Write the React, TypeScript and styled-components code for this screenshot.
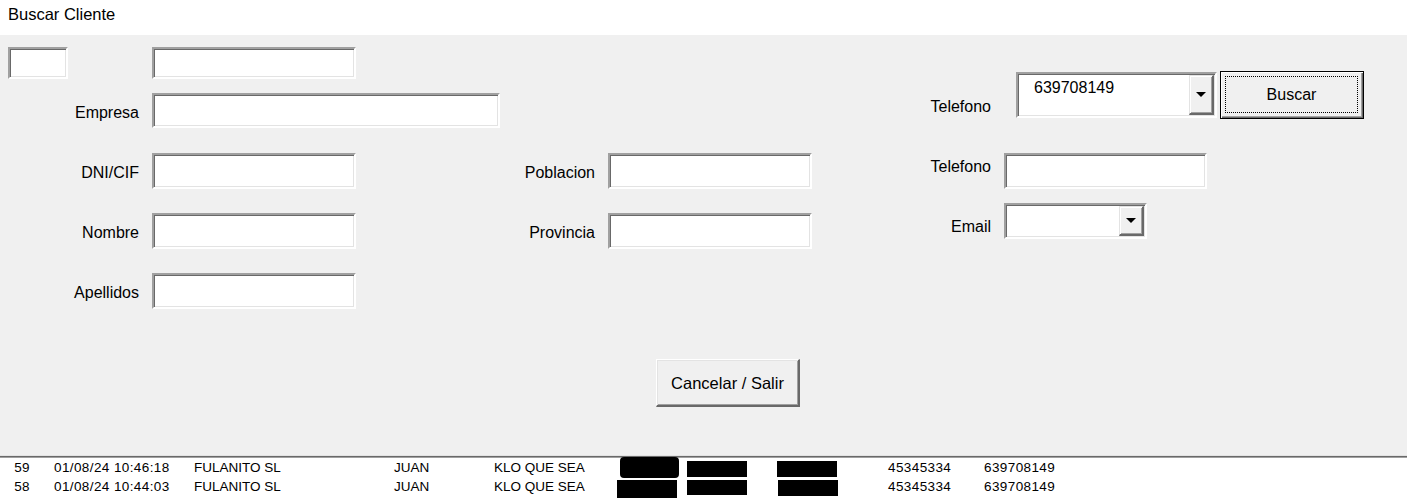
import React from "react";
import styled, { createGlobalStyle } from "styled-components";

const Global = createGlobalStyle`
  html, body { margin: 0; padding: 0; background: #fff; }
  body { font-family: "Liberation Sans", Arial, sans-serif; color: #000; }
  * { box-sizing: border-box; }
`;

const Window = styled.div`
  width: 1418px;
  height: 502px;
  overflow: hidden;
  background: #fff;
`;

const TitleBar = styled.div`
  height: 35px;
  padding: 5px 0 0 8px;
  font-size: 16.5px;
  line-height: 18px;
`;

const Panel = styled.div`
  width: 1407px;
  height: 421px;
  background: #f0f0f0;
  border-bottom: 1px solid #e3e3e3;
  display: flex;
  flex-direction: column;
`;

const Separator = styled.div`
  width: 1407px;
  height: 2px;
  border-top: 1px solid #696969;
  border-bottom: 1px solid #a0a0a0;
`;

const Columns = styled.div`
  display: flex;
  align-items: flex-start;
`;

const Column = styled.div<{ $w: number; $pt: number }>`
  width: ${(p) => p.$w}px;
  padding-top: ${(p) => p.$pt}px;
  display: flex;
  flex-direction: column;
`;

const TopRow = styled.div`
  display: flex;
  padding-left: 8px;
  gap: 84px;
`;

const FieldRow = styled.div<{ $mt?: number; $gap: number }>`
  display: flex;
  align-items: flex-start;
  margin-top: ${(p) => p.$mt ?? 0}px;
  gap: ${(p) => p.$gap}px;
`;

const Label = styled.div<{ $w: number; $pt: number }>`
  width: ${(p) => p.$w}px;
  padding-top: ${(p) => p.$pt}px;
  text-align: right;
  font-size: 16px;
  line-height: 18px;
  white-space: nowrap;
`;

const TextBox = styled.div<{ $w: number; $h: number; $mt?: number; $ml?: number }>`
  width: ${(p) => p.$w}px;
  height: ${(p) => p.$h}px;
  margin-top: ${(p) => p.$mt ?? 0}px;
  margin-left: ${(p) => p.$ml ?? 0}px;
  background: #fff;
  border-style: solid;
  border-width: 2px;
  border-color: #a0a0a0 #fff #fff #a0a0a0;
  box-shadow: inset 1px 1px 0 #696969, inset -1px -1px 0 #e3e3e3;
`;

const Combo = styled(TextBox)`
  display: flex;
  padding: 1px;
`;

const ComboText = styled.div`
  flex: 1;
  padding: 4px 0 0 15px;
  font-size: 16px;
  line-height: 18px;
`;

const DropButton = styled.div`
  width: 25px;
  height: 100%;
  background: #f0f0f0;
  border-style: solid;
  border-width: 1px 2px 2px 1px;
  border-color: #e3e3e3 #696969 #696969 #e3e3e3;
  box-shadow: inset 1px 1px 0 #fff, inset -1px -1px 0 #a0a0a0;
  display: flex;
  align-items: center;
  justify-content: center;
`;

const Arrow = () => (
  <svg width="10" height="5" viewBox="0 0 10 5">
    <polygon points="0,0 10,0 5,5" fill="#000" />
  </svg>
);

const DefaultButton = styled.div`
  width: 144px;
  height: 48px;
  margin-left: 3px;
  background: #f0f0f0;
  border: 1px solid #000;
  box-shadow: inset 1px 1px 0 #fff, inset -1px -1px 0 #696969, inset -2px -2px 0 #a0a0a0;
  padding: 4px 5px 5px 4px;
  display: flex;
`;

const FocusRect = styled.div`
  flex: 1;
  border: 1px dotted #000;
  display: flex;
  align-items: center;
  justify-content: center;
  font-size: 16px;
  line-height: 18px;
`;

const Footer = styled.div`
  display: flex;
  padding-left: 656px;
  margin-top: 50px;
`;

const PushButton = styled.div`
  width: 144px;
  height: 48px;
  background: #f0f0f0;
  border-style: solid;
  border-width: 1px 2px 2px 1px;
  border-color: #fff #696969 #696969 #fff;
  box-shadow: inset 1px 1px 0 #e3e3e3, inset -1px -1px 0 #a0a0a0;
  display: flex;
  align-items: center;
  justify-content: center;
  font-size: 16.5px;
  line-height: 18px;
`;

const List = styled.div`
  padding-top: 1px;
  font-size: 13.5px;
`;

const Row = styled.div`
  display: grid;
  grid-template-columns: 54px 140px 200px 100px 122px 71px 90px 111px 96px auto;
  height: 18.5px;
  line-height: 18px;
  white-space: nowrap;
`;

const IdCell = styled.div`
  text-align: right;
  padding-right: 24px;
  letter-spacing: 0.4px;
`;

const Cell = styled.div<{ $num?: boolean }>`
  letter-spacing: ${(p) => (p.$num ? "0.4px" : "0")};
`;

const Redact = styled.div<{ $x: number; $y: number; $w: number; $h: number; $r?: number }>`
  width: ${(p) => p.$w}px;
  height: ${(p) => p.$h}px;
  margin-left: ${(p) => p.$x}px;
  margin-top: ${(p) => p.$y}px;
  background: #000;
  border-radius: ${(p) => p.$r ?? 0}px;
`;

type R = [number, number, number, number, number?];
const rows: { id: string; date: string; redact: R[] }[] = [
  {
    id: "59",
    date: "01/08/24 10:46:18",
    redact: [
      [4, -2, 59, 21, 4],
      [0, 2, 60, 16],
      [0, 2, 60, 16],
    ],
  },
  {
    id: "58",
    date: "01/08/24 10:44:03",
    redact: [
      [1, 2, 60, 18],
      [0, 2, 60, 15],
      [1, 2, 60, 16],
    ],
  },
];

export default function App() {
  return (
    <Window>
      <Global />
      <TitleBar>Buscar Cliente</TitleBar>
      <Panel>
        <Columns>
          <Column $w={500} $pt={12}>
            <TopRow>
              <TextBox $w={60} $h={32} />
              <TextBox $w={204} $h={32} />
            </TopRow>
            <FieldRow $mt={14} $gap={13}>
              <Label $w={139} $pt={11}>Empresa</Label>
              <TextBox $w={348} $h={35} />
            </FieldRow>
            <FieldRow $mt={25} $gap={13}>
              <Label $w={139} $pt={11}>DNI/CIF</Label>
              <TextBox $w={204} $h={36} />
            </FieldRow>
            <FieldRow $mt={24} $gap={13}>
              <Label $w={139} $pt={11}>Nombre</Label>
              <TextBox $w={204} $h={36} />
            </FieldRow>
            <FieldRow $mt={24} $gap={13}>
              <Label $w={139} $pt={11}>Apellidos</Label>
              <TextBox $w={204} $h={36} />
            </FieldRow>
          </Column>
          <Column $w={312} $pt={118}>
            <FieldRow $gap={13}>
              <Label $w={95} $pt={11}>Poblacion</Label>
              <TextBox $w={204} $h={36} />
            </FieldRow>
            <FieldRow $mt={24} $gap={13}>
              <Label $w={95} $pt={11}>Provincia</Label>
              <TextBox $w={204} $h={36} />
            </FieldRow>
          </Column>
          <Column $w={595} $pt={36}>
            <FieldRow $gap={0}>
              <Label $w={179} $pt={27}>Telefono</Label>
              <Combo $w={201} $h={46} $mt={1} $ml={25}>
                <ComboText>639708149</ComboText>
                <DropButton>
                  <Arrow />
                </DropButton>
              </Combo>
              <DefaultButton>
                <FocusRect>Buscar</FocusRect>
              </DefaultButton>
            </FieldRow>
            <FieldRow $mt={34} $gap={13}>
              <Label $w={179} $pt={5}>Telefono</Label>
              <TextBox $w={203} $h={36} />
            </FieldRow>
            <FieldRow $mt={14} $gap={13}>
              <Label $w={179} $pt={15}>Email</Label>
              <Combo $w={143} $h={36}>
                <ComboText />
                <DropButton>
                  <Arrow />
                </DropButton>
              </Combo>
            </FieldRow>
          </Column>
        </Columns>
        <Footer>
          <PushButton>Cancelar / Salir</PushButton>
        </Footer>
      </Panel>
      <Separator />
      <List>
        {rows.map((r) => (
          <Row key={r.id}>
            <IdCell>{r.id}</IdCell>
            <Cell $num>{r.date}</Cell>
            <Cell>FULANITO SL</Cell>
            <Cell>JUAN</Cell>
            <Cell>KLO QUE SEA</Cell>
            {r.redact.map(([x, y, w, h, rad], i) => (
              <Cell key={i}>
                <Redact $x={x} $y={y} $w={w} $h={h} $r={rad} />
              </Cell>
            ))}
            <Cell $num>45345334</Cell>
            <Cell $num>639708149</Cell>
          </Row>
        ))}
      </List>
    </Window>
  );
}
